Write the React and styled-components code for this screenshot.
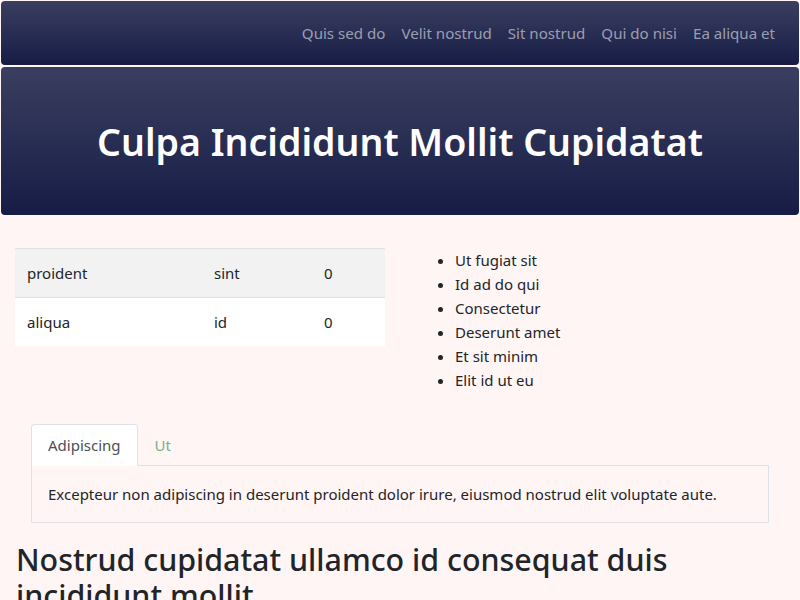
import React from 'react';
import styled, { createGlobalStyle } from 'styled-components';

const GlobalStyle = createGlobalStyle`
	* { box-sizing: border-box; }
	body {
		margin: 0;
		background-color: #fff5f5;
		font-family: "Noto Sans", "Open Sans", sans-serif;
		font-size: 15px;
		line-height: 24px;
		color: #212529;
	}
`;

const Banner = styled.div`
	margin: ${(p) => p.$margin};
	height: ${(p) => p.$height};
	border-radius: 4px;
	background: linear-gradient(to bottom, #3a3f60, #171c46);
	display: flex;
	align-items: center;
`;

const Navbar = styled(Banner).attrs({ as: 'nav' })`
	justify-content: flex-end;
	padding: 0 16px;
`;

const NavLink = styled.a`
	padding: 8px;
	color: rgba(255, 255, 255, 0.55);
	font-size: 15.1px;
	text-decoration: none;
`;

const Hero = styled(Banner).attrs({ as: 'header' })`
	justify-content: center;
`;

const HeroTitle = styled.h1`
	margin: 0;
	color: #fff;
	font-size: 37.5px;
	font-weight: 600;
	line-height: 1.2;
`;

const Row = styled.div`
	display: grid;
	grid-template-columns: 1fr 1fr;
	padding-top: 33px;
`;

const Col = styled.div`
	padding: 0 15px;
`;

const Table = styled.table`
	width: 100%;
	border-collapse: collapse;
`;

const Tr = styled.tr`
	background-color: ${(p) => (p.$striped ? '#f2f2f2' : '#fff')};
`;

const Td = styled.td`
	padding: 12px;
	border-top: 1px solid #dee2e6;
	width: ${(p) => p.$w || 'auto'};
`;

const List = styled.ul`
	margin: 0;
	padding-left: 40px;
`;

const TabsWrap = styled.div`
	padding: 32px 31px 0;
`;

const TabNav = styled.div`
	display: flex;
	border-bottom: 1px solid #dee2e6;
`;

const Tab = styled.button`
	font: inherit;
	padding: 8px 16px;
	margin-bottom: -1px;
	border: 1px solid ${(p) => (p.$active ? '#dee2e6' : 'transparent')};
	border-bottom-color: ${(p) => (p.$active ? '#fff' : 'transparent')};
	border-top-left-radius: 4px;
	border-top-right-radius: 4px;
	background: ${(p) => (p.$active ? '#fff' : 'transparent')};
	color: ${(p) => (p.$active ? '#495057' : '#6fb88a')};
`;

const TabPanel = styled.div`
	border: 1px solid #dee2e6;
	border-top: none;
	padding: 16px;
`;

const PanelText = styled.p`
	margin: 0;
`;

const Heading = styled.h2`
	margin: 19px 0 0;
	padding: 0 16px;
	font-size: 30.4px;
	font-weight: 500;
	line-height: 1.2;
`;

const navItems = ['Quis sed do', 'Velit nostrud', 'Sit nostrud', 'Qui do nisi', 'Ea aliqua et'];
const rows = [
	['proident', 'sint', '0'],
	['aliqua', 'id', '0'],
];
const items = ['Ut fugiat sit', 'Id ad do qui', 'Consectetur', 'Deserunt amet', 'Et sit minim', 'Elit id ut eu'];

const App = () => {
	return (
		<div>
			<GlobalStyle />
			<Navbar $margin="1px 1px 0" $height="64px">
				{navItems.map((n) => (
					<NavLink key={n} href="#">
						{n}
					</NavLink>
				))}
			</Navbar>
			<Hero $margin="2px 1px 0" $height="148px">
				<HeroTitle>Culpa Incididunt Mollit Cupidatat</HeroTitle>
			</Hero>
			<Row>
				<Col>
					<Table>
						<tbody>
							{rows.map((r, i) => (
								<Tr key={i} $striped={i === 0}>
									<Td $w="187px">{r[0]}</Td>
									<Td $w="110px">{r[1]}</Td>
									<Td>{r[2]}</Td>
								</Tr>
							))}
						</tbody>
					</Table>
				</Col>
				<Col>
					<List>
						{items.map((t) => (
							<li key={t}>{t}</li>
						))}
					</List>
				</Col>
			</Row>
			<TabsWrap>
				<TabNav>
					<Tab $active>Adipiscing</Tab>
					<Tab>Ut</Tab>
				</TabNav>
				<TabPanel>
					<PanelText>
						Excepteur non adipiscing in deserunt proident dolor irure, eiusmod nostrud elit voluptate aute.
					</PanelText>
				</TabPanel>
			</TabsWrap>
			<Heading>Nostrud cupidatat ullamco id consequat duis incididunt mollit</Heading>
		</div>
	);
};

export default App;
